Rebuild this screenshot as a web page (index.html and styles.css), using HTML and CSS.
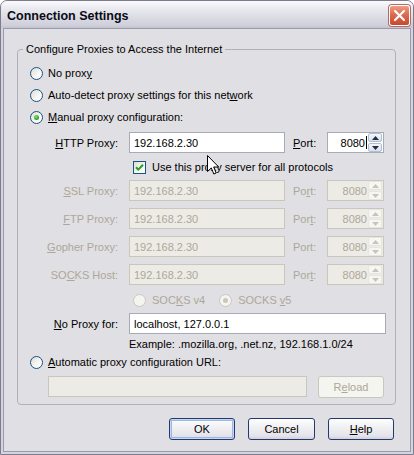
FILE: index.html
```html
<!DOCTYPE html>
<html lang="en">
<head>
    <meta charset="UTF-8">
    <title>Connection Settings</title>
    <link rel="stylesheet" href="styles.css">
</head>
<body>
    <div class="window">
        <div class="titlebar">
            <span class="title">Connection Settings</span>
            <span class="close-btn">
                <svg width="13" height="13" viewBox="0 0 13 13"><path d="M2 2 L11 11 M11 2 L2 11" stroke="#fff" stroke-width="2.2" stroke-linecap="round"/></svg>
            </span>
        </div>

        <div class="client">
            <fieldset class="group">
                <legend>Configure Proxies to Access the Internet</legend>

                <div class="option-row first">
                    <span class="radio"></span>
                    <span>No prox<u>y</u></span>
                </div>
                <div class="option-row">
                    <span class="radio"></span>
                    <span>Auto-detect proxy settings for this net<u>w</u>ork</span>
                </div>
                <div class="option-row">
                    <span class="radio checked"></span>
                    <span><u>M</u>anual proxy configuration:</span>
                </div>

                <div class="field-row http-row">
                    <span class="field-label"><u>H</u>TTP Proxy:</span>
                    <span class="text-box">192.168.2.30</span>
                    <span class="port-label"><u>P</u>ort:</span>
                    <span class="port-box">
                        <span class="port-value">8080<span class="caret"></span></span>
                        <span class="spinner">
                            <span class="spin-btn"><svg width="7" height="4" viewBox="0 0 7 4"><path d="M0 4 L3.5 0 L7 4 Z" fill="#2b2b40"/></svg></span>
                            <span class="spin-btn"><svg width="7" height="4" viewBox="0 0 7 4"><path d="M0 0 L3.5 4 L7 0 Z" fill="#2b2b40"/></svg></span>
                        </span>
                    </span>
                </div>

                <div class="check-row">
                    <span class="checkbox">
                        <svg width="11" height="11" viewBox="0 0 11 11"><path d="M2 5.2 L4.3 7.6 L9 2.8" stroke="#21a121" stroke-width="2" fill="none"/></svg>
                    </span>
                    <span>Use this proxy server for all protocols</span>
                </div>

                <div class="field-row disabled first-disabled">
                    <span class="field-label"><u>S</u>SL Proxy:</span>
                    <span class="text-box">192.168.2.30</span>
                    <span class="port-label">Po<u>r</u>t:</span>
                    <span class="port-box">
                        <span class="port-value">8080</span>
                        <span class="spinner">
                            <span class="spin-btn"><svg width="7" height="4" viewBox="0 0 7 4"><path d="M0 4 L3.5 0 L7 4 Z" fill="#c6c5bd"/></svg></span>
                            <span class="spin-btn"><svg width="7" height="4" viewBox="0 0 7 4"><path d="M0 0 L3.5 4 L7 0 Z" fill="#c6c5bd"/></svg></span>
                        </span>
                    </span>
                </div>
                <div class="field-row disabled">
                    <span class="field-label"><u>F</u>TP Proxy:</span>
                    <span class="text-box">192.168.2.30</span>
                    <span class="port-label">Por<u>t</u>:</span>
                    <span class="port-box">
                        <span class="port-value">8080</span>
                        <span class="spinner">
                            <span class="spin-btn"><svg width="7" height="4" viewBox="0 0 7 4"><path d="M0 4 L3.5 0 L7 4 Z" fill="#c6c5bd"/></svg></span>
                            <span class="spin-btn"><svg width="7" height="4" viewBox="0 0 7 4"><path d="M0 0 L3.5 4 L7 0 Z" fill="#c6c5bd"/></svg></span>
                        </span>
                    </span>
                </div>
                <div class="field-row disabled">
                    <span class="field-label"><u>G</u>opher Proxy:</span>
                    <span class="text-box">192.168.2.30</span>
                    <span class="port-label">Port:</span>
                    <span class="port-box">
                        <span class="port-value">8080</span>
                        <span class="spinner">
                            <span class="spin-btn"><svg width="7" height="4" viewBox="0 0 7 4"><path d="M0 4 L3.5 0 L7 4 Z" fill="#c6c5bd"/></svg></span>
                            <span class="spin-btn"><svg width="7" height="4" viewBox="0 0 7 4"><path d="M0 0 L3.5 4 L7 0 Z" fill="#c6c5bd"/></svg></span>
                        </span>
                    </span>
                </div>
                <div class="field-row disabled">
                    <span class="field-label">SO<u>C</u>KS Host:</span>
                    <span class="text-box">192.168.2.30</span>
                    <span class="port-label">Por<u>t</u>:</span>
                    <span class="port-box">
                        <span class="port-value">8080</span>
                        <span class="spinner">
                            <span class="spin-btn"><svg width="7" height="4" viewBox="0 0 7 4"><path d="M0 4 L3.5 0 L7 4 Z" fill="#c6c5bd"/></svg></span>
                            <span class="spin-btn"><svg width="7" height="4" viewBox="0 0 7 4"><path d="M0 0 L3.5 4 L7 0 Z" fill="#c6c5bd"/></svg></span>
                        </span>
                    </span>
                </div>

                <div class="socks-row disabled">
                    <span class="radio"></span>
                    <span class="socks-label">SOC<u>K</u>S v4</span>
                    <span class="radio checked"></span>
                    <span>SOCKS <u>v</u>5</span>
                </div>

                <div class="field-row noproxy-row">
                    <span class="field-label"><u>N</u>o Proxy for:</span>
                    <span class="text-box wide">localhost, 127.0.0.1</span>
                </div>
                <div class="example">Example: .mozilla.org, .net.nz, 192.168.1.0/24</div>

                <div class="option-row auto-row">
                    <span class="radio"></span>
                    <span><u>A</u>utomatic proxy configuration URL:</span>
                </div>
                <div class="url-row">
                    <span class="text-box url-box disabled-box"></span>
                    <span class="btn disabled-btn">R<u>e</u>load</span>
                </div>
            </fieldset>

            <div class="buttons">
                <span class="btn default">OK</span>
                <span class="btn">Cancel</span>
                <span class="btn"><u>H</u>elp</span>
            </div>
        </div>

        <svg class="cursor" width="13" height="21" viewBox="0 0 13 21">
            <path d="M0.5 0.5 L0.5 16.5 L4.3 12.9 L6.8 19 L9.2 18 L6.7 12 L11.7 12 Z" fill="#fff" stroke="#000" stroke-width="1" stroke-linejoin="miter"/>
        </svg>
    </div>
</body>
</html>
```

FILE: styles.css
```css
* {
    margin: 0;
    padding: 0;
    box-sizing: border-box;
}

body {
    font-family: "Liberation Sans", Arial, sans-serif;
    font-size: 11px;
    line-height: 14px;
    color: #000;
    background: #fff;
}

u {
    text-underline-offset: 1px;
}

.window {
    position: relative;
    width: 414px;
    height: 455px;
    border: 1px solid #7c7c8e;
    border-radius: 7px 7px 0 0;
    background: #d4d4de;
    display: flex;
    flex-direction: column;
}

.titlebar {
    height: 27px;
    display: flex;
    align-items: center;
    justify-content: space-between;
    padding: 0 3px 0 6px;
    border-radius: 6px 6px 0 0;
    background: linear-gradient(#fbfbfd, #ebebf1 25%, #dcdce5 60%, #cfcfda 90%, #c4c4d0);
}

.title {
    font-size: 12.5px;
    font-weight: bold;
    color: #0a0a14;
    padding-top: 2px;
}

.close-btn {
    width: 21px;
    height: 21px;
    margin-top: 2px;
    border: 1px solid #fff;
    border-radius: 3px;
    box-shadow: 0 0 0 1px #b66a5c;
    background: linear-gradient(#ef9c86, #de6a4f 45%, #c9472e);
    display: flex;
    align-items: center;
    justify-content: center;
}

.client {
    flex: 1;
    margin: 0 2px 2px;
    border: 1px solid #9a9aae;
    background: #e0dfe3;
    padding: 13px 14px 0 13px;
}

/* group box */
.group {
    border: 1px solid #b2b1ba;
    border-radius: 4px;
    padding: 0 0 7px 0;
    height: 363px;
}

.group legend {
    margin-left: 5px;
    padding: 0 3px;
    line-height: 14px;
}

.option-row {
    height: 22px;
    display: flex;
    align-items: center;
    padding-left: 12px;
    gap: 5px;
}

.option-row.first {
    margin-top: 6px;
}

.radio {
    position: relative;
    width: 13px;
    height: 13px;
    flex: none;
    border: 1px solid #1c5180;
    border-radius: 50%;
    background: linear-gradient(135deg, #dcdcd5, #f8f8f6 60%, #fff);
}

.radio.checked::after {
    content: "";
    position: absolute;
    left: 3px;
    top: 3px;
    width: 5px;
    height: 5px;
    border-radius: 50%;
    background: radial-gradient(circle at 40% 35%, #7be17b, #21a121 70%, #1a8a1a);
}

.field-row {
    height: 21px;
    display: flex;
    align-items: center;
}

.http-row {
    margin-top: 4px;
}

.field-label {
    width: 100px;
    margin-right: 11px;
    text-align: right;
}

.text-box {
    width: 156px;
    height: 21px;
    border: 1px solid #a5acb5;
    background: #fff;
    padding: 0 4px;
    display: flex;
    align-items: center;
}

.text-box.wide {
    width: 257px;
}

.port-label {
    width: 34px;
    margin-left: 8px;
}

.port-box {
    width: 57px;
    height: 21px;
    border: 1px solid #a5acb5;
    background: #fff;
    display: flex;
    align-items: center;
}

.port-value {
    flex: 1;
    text-align: right;
    padding-right: 1px;
    display: flex;
    justify-content: flex-end;
    align-items: center;
}

.caret {
    width: 1px;
    height: 13px;
    background: #000;
    margin-left: 1px;
}

.spinner {
    width: 15px;
    height: 19px;
    display: flex;
    flex-direction: column;
    gap: 1px;
    padding: 0 1px 0 0;
}

.spin-btn {
    flex: 1;
    display: flex;
    align-items: center;
    justify-content: center;
    border: 1px solid #b4bed3;
    border-radius: 2px;
    background: linear-gradient(#f4f6fb, #d9e0ee);
}

.check-row {
    height: 14px;
    margin-top: 7px;
    padding-left: 115px;
    display: flex;
    align-items: center;
    gap: 6px;
}

.checkbox {
    width: 13px;
    height: 13px;
    border: 1px solid #1c5180;
    background: linear-gradient(135deg, #dcdcd5, #f8f8f6 60%, #fff);
    display: flex;
    align-items: center;
    justify-content: center;
}

.field-row.disabled {
    margin-top: 7px;
    color: #aca899;
}

.field-row.first-disabled {
    margin-top: 6px;
}

.disabled .text-box,
.disabled .port-box,
.disabled-box {
    background: #ecebe6;
    border-color: #c9c7ba;
}

.disabled .spin-btn {
    background: #f6f6f3;
    border-color: #e6e5df;
}

.socks-row {
    height: 14px;
    margin-top: 8px;
    padding-left: 115px;
    display: flex;
    align-items: center;
    gap: 6px;
    color: #aca899;
}

.socks-row .socks-label {
    margin-right: 8px;
}

.socks-row .radio {
    border-color: #cac8bb;
    background: #f4f4f0;
}

.socks-row .radio.checked::after {
    background: #cac8bb;
}

.noproxy-row {
    margin-top: 6px;
}

.example {
    height: 14px;
    margin-top: 3px;
    padding-left: 111px;
}

.auto-row {
    height: 14px;
    margin-top: 4px;
}

.url-row {
    margin-top: 7px;
    padding-left: 30px;
    display: flex;
    gap: 11px;
}

.url-box {
    width: 259px;
}

/* push buttons */
.btn {
    width: 66px;
    height: 22px;
    border: 1px solid #23396b;
    border-radius: 3px;
    background: linear-gradient(#fefefe, #f1f1f4 40%, #e4e3ea 85%, #d2d1da);
    display: flex;
    align-items: center;
    justify-content: center;
}

.btn.default {
    box-shadow: inset 0 0 0 1px #c5d6f2, inset 0 0 0 2px #9eb7e4;
}

.disabled-btn {
    border-color: #cac8bb;
    background: #f4f4f0;
    color: #aca899;
}

.buttons {
    display: flex;
    justify-content: flex-end;
    gap: 13px;
    margin-top: 13px;
    padding-right: 2px;
}

.buttons .btn:nth-child(2) {
    width: 67px;
}

.cursor {
    position: absolute;
    left: 206px;
    top: 154px;
}
```
